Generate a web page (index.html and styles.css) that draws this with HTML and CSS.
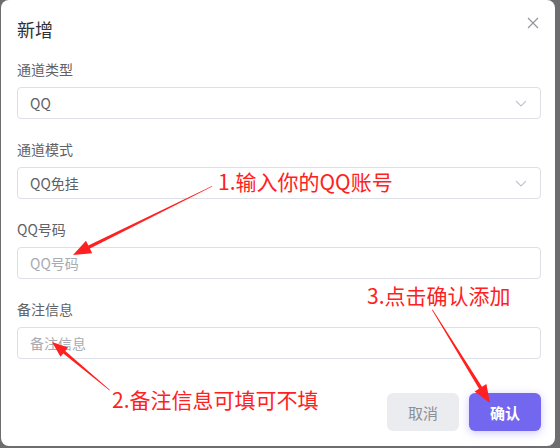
FILE: index.html
```html
<!DOCTYPE html>
<html lang="zh-CN">
  <head>
    <meta charset="UTF-8" />
    <meta name="viewport" content="width=device-width, initial-scale=1.0" />
    <title>新增</title>
    <link rel="stylesheet" href="styles.css">
  </head>
  <body>
    <div class="dialog">
      <div class="dialog-header">
        <span class="dialog-title">新增</span>
        <button class="close-btn" aria-label="关闭">
          <svg width="12" height="12" viewBox="0 0 12 12">
            <path d="M1 1 L11 11 M11 1 L1 11" stroke="#909399" stroke-width="1.1" fill="none" />
          </svg>
        </button>
      </div>

      <div class="form">
        <div class="form-item">
          <label>通道类型</label>
          <div class="select">
            <span>QQ</span>
            <svg class="chevron" width="12" height="7" viewBox="0 0 12 7">
              <path d="M1 1 L6 6 L11 1" stroke="#c0c4cc" stroke-width="1.1" fill="none" />
            </svg>
          </div>
        </div>

        <div class="form-item">
          <label>通道模式</label>
          <div class="select">
            <span>QQ免挂</span>
            <svg class="chevron" width="12" height="7" viewBox="0 0 12 7">
              <path d="M1 1 L6 6 L11 1" stroke="#c0c4cc" stroke-width="1.1" fill="none" />
            </svg>
          </div>
        </div>

        <div class="form-item">
          <label>QQ号码</label>
          <input type="text" class="input" placeholder="QQ号码" />
        </div>

        <div class="form-item">
          <label>备注信息</label>
          <input type="text" class="input" placeholder="备注信息" />
        </div>
      </div>

      <div class="dialog-footer">
        <button class="btn btn-cancel">取消</button>
        <button class="btn btn-primary">确认</button>
      </div>
    </div>

    <!-- red tutorial marks drawn over the dialog -->
    <div class="note note-1">1.输入你的QQ账号</div>
    <div class="note note-2">2.备注信息可填可不填</div>
    <div class="note note-3">3.点击确认添加</div>
    <svg class="arrows" width="560" height="448" viewBox="0 0 560 448">
      <polygon fill="#ff2121"
        points="212,186 88.3,245.4 86,240.7 73,255 92.2,253.3 89.9,248.6 212.3,186.6" />
      <polygon fill="#ff2121"
        points="110,390 65.3,351 68.1,347.6 52,342 60.5,356.8 63.3,353.4 109.6,390.5" />
      <polygon fill="#ff2121"
        points="432,310 479,388.7 474.6,391.4 490,403 486.4,384 482,386.7 432.6,309.6" />
    </svg>
  </body>
</html>
```

FILE: styles.css
```css
* {
  box-sizing: border-box;
}

body {
  margin: 0;
  width: 560px;
  height: 448px;
  overflow: hidden;
  position: relative;
  background: #6d6d6f;
  font-family: "Noto Sans CJK SC", "Noto Sans", sans-serif;
}

.dialog {
  width: 554px;
  height: 446px;
  margin-left: 1px;
  background: #fff;
  border-radius: 8px;
  padding: 17px 14px 0 16px;
  display: flex;
  flex-direction: column;
}

.dialog-header {
  display: flex;
  justify-content: space-between;
  align-items: flex-start;
  height: 42px;
}

.dialog-title {
  font-size: 18px;
  line-height: 24px;
  color: #303133;
}

.close-btn {
  background: none;
  border: none;
  padding: 0;
  margin: 0 2px 0 0;
  width: 12px;
  height: 12px;
  cursor: pointer;
  display: flex;
}

.form {
  display: flex;
  flex-direction: column;
}

.form-item {
  display: flex;
  flex-direction: column;
  margin-bottom: 20px;
}

.form-item label {
  font-size: 14px;
  line-height: 20px;
  color: #606266;
  margin-bottom: 8px;
}

.select,
.input {
  height: 32px;
  width: 100%;
  border: 1px solid #dcdfe6;
  border-radius: 4px;
  padding: 0 12px;
  font-size: 14px;
  font-family: inherit;
  color: #606266;
  background: #fff;
  outline: none;
}

.select {
  display: flex;
  align-items: center;
  justify-content: space-between;
}

.chevron {
  margin-right: 1px;
}

.input::placeholder {
  color: #a8abb2;
}

.dialog-footer {
  display: flex;
  justify-content: flex-end;
  gap: 10px;
  margin-top: 14px;
}

.btn {
  width: 72px;
  height: 38px;
  border: none;
  border-radius: 6px;
  font-size: 15px;
  font-family: inherit;
  cursor: pointer;
}

.btn-cancel {
  background: #ebecef;
  color: #8c8f96;
}

.btn-primary {
  background: #7367f0;
  color: #fff;
  font-weight: bold;
  box-shadow: 0 2px 8px rgba(115, 103, 240, 0.35);
}

.note {
  position: absolute;
  color: #ff2121;
  font-size: 21px;
  line-height: 24px;
  white-space: nowrap;
}

.note-1 {
  left: 218px;
  top: 169px;
}

.note-2 {
  left: 112px;
  top: 387px;
}

.note-3 {
  left: 367px;
  top: 283px;
}

.arrows {
  position: absolute;
  left: 0;
  top: 0;
  pointer-events: none;
}
```
